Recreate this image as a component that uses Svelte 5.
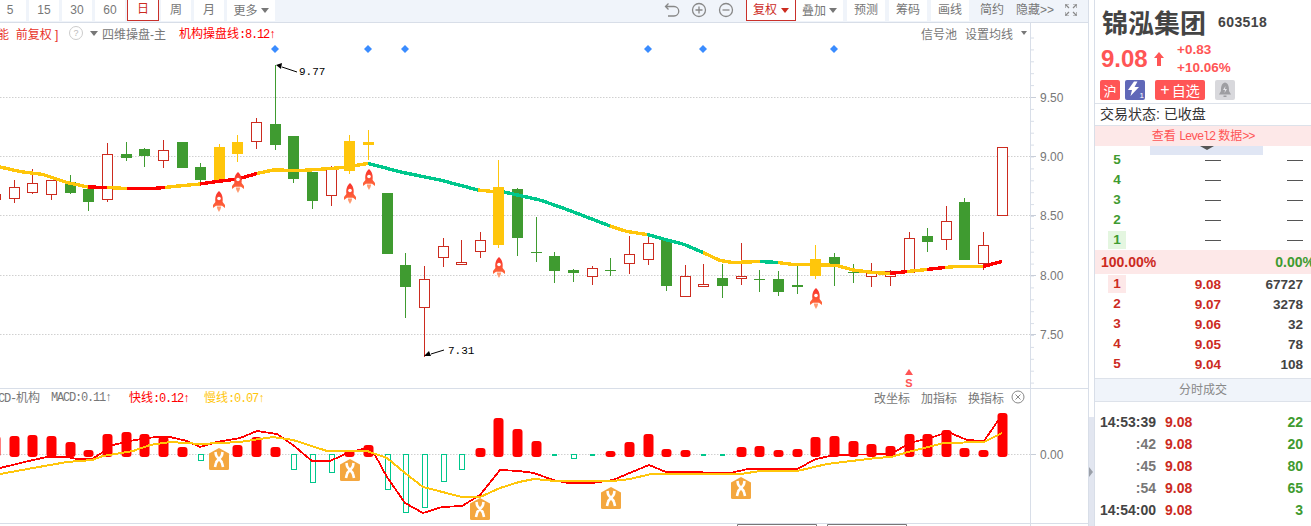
<script>
  const X = (i) => Math.floor(14.3 + 18.64 * i) + 0.5;
  // color, wickTop, bodyTop, bodyBottom, wickBottom
  const raw = [
    ['r',194,194,199,199],
    ['r',180,187,198,203],['r',169,183,192,194],['r',180,180,194,200],['g',175,182,193,194],['g',187,189,202,211],
    ['r',143,154,199,202],['g',142,154,158,161],['g',148,149,156,167],['r',140,150,160,168],['g',142,142,168,168],
    ['g',163,167,180,182],['y',144,147,182,182],['y',135,142,154,162],['r',118,122,141,149],['g',65,124,145,150],
    ['g',136,136,179,183],['g',172,172,201,209],['r',166,168,195,206],['y',135,141,171,174],['y',130,142,145,160],
    ['g',193,193,254,254],['g',253,265,287,318],['r',266,279,307,357],['r',238,246,257,267],['r',240,262,264,264],
    ['r',232,240,251,258],['y',160,187,245,248],['g',188,189,238,256],['g',217,252,253,262],['g',252,256,271,283],
    ['g',269,270,273,282],['r',266,268,276,285],['g',258,270,271,276],['r',236,254,263,274],['r',237,243,259,265],
    ['g',240,240,286,291],['r',265,276,296,296],['r',264,284,286,286],['g',264,278,286,298],['r',243,276,278,285],
    ['g',270,279,280,292],['g',271,279,292,296],['g',265,285,287,294],['y',245,259,276,279],['g',253,257,265,286],
    ['g',264,272,273,283],['r',263,272,276,287],['r',270,271,276,286],['r',232,238,272,272],['g',228,236,242,252],
    ['r',206,221,239,250],['g',198,202,260,260],['r',232,245,263,270],['r',147,147,215,215]
  ];
  const candles = raw.map((c, n) => ({ x: X(n - 1), k: c[0], wt: c[1], bt: c[2], bb: c[3], wb: c[4] }));

  const RED = '#ff0000', YEL = '#ffc60b', GRN = '#00c78c';
  const maPts = [[0,167],[20,171.5],[43,174.5],[67,182.5],[88,187],[107,187.5],[127,188.5],[153,188.5],[165,187.5],[173,186.5],[200,184],[217,181.5],[238,179],[257,173.5],[273,170],[300,170.5],[317,169.5],[343,167.5],[368,163.5],[403,172.5],[440,180],[478,190],[493,191.5],[504,192],[540,200],[567,209.5],[610,226],[627,231.5],[647,234.5],[660,238],[667,240],[683,244],[703,252.5],[720,260.5],[733,262.5],[760,261.5],[778,262.5],[793,264.5],[825,265],[837,265.5],[853,270],[873,272.5],[890,273.5],[907,271.5],[927,269.5],[945,267.5],[957,266.5],[983,266.5],[1002,261.5]];
  const colorAt = (x) => {
    const stops = [[88,YEL],[107,RED],[127,YEL],[165,RED],[200,YEL],[257,RED],[368,YEL],[478,GRN],[504,YEL],[610,GRN],[647,YEL],[703,GRN],[760,YEL],[778,GRN],[890,YEL],[907,RED],[927,YEL],[945,RED],[983,YEL],[1003,RED]];
    return stops.find((s) => x < s[0])[1];
  };
  const maSegs = maPts.slice(1).map((p, n) => ({ a: maPts[n], b: p, c: colorAt((maPts[n][0] + p[0]) / 2) }));

  const grid = [{ y: 97.5, t: '9.50' }, { y: 156.5, t: '9.00' }, { y: 215.5, t: '8.50' }, { y: 275.5, t: '8.00' }, { y: 334.5, t: '7.50' }];
  const ticks = Array.from({ length: 30 }, (_, n) => 38 + n * 11.9);
  const diamonds = [275, 368, 405, 648, 703, 834];
  const rockets = [[219,191],[238,172],[350,183],[369,169],[499,257],[816,288]];

  const macd = [436,436,435,436,442,450,434,432,434,437,447,['h',460],null,445,437,447,['h',469],['h',482],['h',472],450,445,['h',489],['h',512],['h',507],['h',481],['h',469],448,418,429,441,'d',['h',458],'d',451,442,434,449,450,'d','d',447,446,450,449,437,436,441,444,446,434,434,430,448,450,413];
  const bars = macd.map((v, n) => ({ x: X(n - 1), v }));
  const fast = [[0,468],[33,460],[47,457],[67,457],[77,459],[92,459],[103,452],[113,445],[130,441],[147,438],[157,437],[170,437],[187,441],[200,447],[217,442],[240,438],[257,431],[277,434],[293,445],[312,461],[330,461],[350,452],[367,448],[375,455],[387,477],[405,503],[423,513],[442,507],[462,506],[480,495],[500,470],[519,471],[534,473],[553,480],[568,483],[592,483],[613,480],[632,472],[649,465],[666,472],[684,472],[730,473],[748,469],[797,469],[816,459],[835,455],[891,454],[910,443],[933,437],[948,432],[967,440],[984,441],[1002,415]];
  const slow = [[0,474],[33,468],[67,462],[92,460],[103,456],[133,451],[150,445],[170,442],[200,444],[240,442],[273,437],[293,440],[327,451],[367,451],[387,458],[405,473],[423,487],[462,497],[480,497],[500,488],[519,482],[534,479],[556,481],[613,481],[630,479],[651,474],[741,474],[760,471],[797,471],[827,464],[876,458],[891,457],[908,452],[944,443],[984,442],[1002,433]];
  const pts = (a) => a.map((p) => p.join(',')).join(' ');
  const xIcons = [[219,448],[350,459],[480,498],[611,487],[741,477]];

  const leftTabs = ['5', '15', '30', '60', '日', '周', '月'];
  const bids = [5, 4, 3, 2, 1];
  const asks = [[1,'9.08','67727'],[2,'9.07','3278'],[3,'9.06','32'],[4,'9.05','78'],[5,'9.04','108']];
  const trades = [['14:53:39','9.08','22'],[':42','9.08','20'],[':45','9.08','80'],[':54','9.08','65'],['14:54:00','9.08','3']];
</script>

<div class="page">
  <main class="main">
    <header class="toolbar">
      <div class="tabs">
        {#each leftTabs as t, n}
          <span class="tab" class:first={n === 0} class:on={t === '日'}>{t}</span>
        {/each}
        <span class="tab more">更多<i class="caret grey"></i></span>
      </div>
      <div class="tools">
        <svg class="ico" viewBox="0 0 16 16" width="16" height="16"><path d="M4.5 1.5 L1.5 4.5 L4.5 7.5 M2 4.5 H10 a4.5 4.5 0 0 1 0 9.5 H4" fill="none" stroke="#888" stroke-width="1.3"/></svg>
        <svg class="ico" viewBox="0 0 16 16" width="16" height="16"><circle cx="8" cy="8" r="6.5" fill="none" stroke="#888" stroke-width="1.3"/><path d="M4.5 8h7M8 4.5v7" stroke="#888" stroke-width="1.3"/></svg>
        <svg class="ico" viewBox="0 0 16 16" width="16" height="16"><circle cx="8" cy="8" r="6.5" fill="none" stroke="#888" stroke-width="1.3"/><path d="M4.5 8h7" stroke="#888" stroke-width="1.3"/></svg>
        <span class="btn fq">复权<i class="caret redc"></i></span>
        <span class="btn dj">叠加<i class="caret grey"></i></span>
        <span class="btn">预测</span>
        <span class="btn">筹码</span>
        <span class="btn">画线</span>
        <span class="plain jy">简约</span>
        <span class="plain yc">隐藏&gt;&gt;</span>
        <svg class="full" viewBox="0 0 12 12" width="12" height="12"><path d="M0 4V0h4M1 1l3 3M8 0h4v4M11 1L8 4M0 8v4h4M1 11l3-3M12 8v4H8M11 11L8 8" fill="none" stroke="#888" stroke-width="1.2"/></svg>
      </div>
    </header>

    <section class="kline">
      <svg class="plot" viewBox="0 23 1088 365" width="1088" height="365">
        <defs>
          <linearGradient id="rk" x1="0" y1="0" x2="0" y2="1">
            <stop offset="0" stop-color="#f9302c"/>
            <stop offset="1" stop-color="#ff6a3c"/>
          </linearGradient>
        </defs>
        {#each grid as g}
          <line x1="0" x2="1030" y1={g.y} y2={g.y} stroke="#d0d0d0" stroke-dasharray="1.5 1.5"/>
        {/each}
        {#each diamonds as d}
          <path d="M{d} 45 L{d+4} 49 L{d} 53 L{d-4} 49Z" fill="#3a8cff"/>
        {/each}
        <g shape-rendering="crispEdges">
          {#each candles as c}
            {@const col = c.k === 'r' ? '#cc2b1f' : c.k === 'g' ? '#3f9b30' : '#ffc60b'}
            <line x1={c.x} x2={c.x} y1={c.wt} y2={c.wb} stroke={col}/>
            {#if c.k === 'r'}
              <rect x={c.x - 5} y={c.bt + 0.5} width="10" height={c.bb - c.bt} fill="#fff" stroke={col}/>
            {:else}
              <rect x={c.x - 5.5} y={c.bt} width="11" height={Math.max(c.bb - c.bt, 1)} fill={col}/>
            {/if}
          {/each}
          {#each maSegs as s}
            <line x1={s.a[0]} y1={s.a[1]} x2={s.b[0]} y2={s.b[1]} stroke={s.c} stroke-width="3.4"/>
          {/each}
        </g>
        {#each rockets as r}
          <g transform="translate({r[0] - 6},{r[1]})">
            <path d="M6 0 C9.6 3 10 7 9.6 11 L12 14 V17 L9 14.8 H3 L0 17 V14 L2.4 11 C2 7 2.4 3 6 0Z" fill="url(#rk)"/>
            <circle cx="6" cy="7.5" r="1.8" fill="#fff"/>
            <path d="M3.8 15.5 H8.2 L7.6 18 L6 21 L4.4 18Z" fill="#ff9a70"/>
          </g>
        {/each}
        <path d="M297 72 L282 67" stroke="#000" fill="none"/>
        <path d="M276 65 L282 63 L281 69Z" fill="#000"/>
        <text class="mark" x="299" y="75">9.77</text>
        <path d="M444 350 L431 354" stroke="#000" fill="none"/>
        <path d="M424 356 L429 351 L431 356Z" fill="#000"/>
        <text class="mark" x="448" y="354">7.31</text>
        <path d="M909 369 L913 375 H905Z" fill="#f55"/>
        <text class="sig" x="909" y="387">S</text>
        <line x1="1030.5" x2="1030.5" y1="23" y2="388" stroke="#d8dee8"/>
        {#each ticks as t}
          <line x1="1031" x2="1034" y1={t} y2={t} stroke="#d8dee8"/>
        {/each}
        {#each grid as g}
          <line x1="1031" x2="1036" y1={g.y} y2={g.y} stroke="#c8ced8"/>
          <text class="axis" x="1040" y={g.y + 4}>{g.t}</text>
        {/each}
      </svg>
      <div class="head">
        <span class="hl redt clip">能&nbsp;&nbsp;前复权 ]</span>
        <span class="q">?</span>
        <i class="caret grey tri"></i>
        <span class="hl">四维操盘-主</span>
        <span class="hl redb">机构操盘线<span class="a">:8.12↑</span></span>
      </div>
      <div class="head-r">
        <span class="xinhao">信号池</span><span>设置均线</span><i class="caret grey small"></i>
      </div>
    </section>

    <section class="macd">
      <svg class="plot" viewBox="0 389 1088 137" width="1088" height="137">
        <line x1="0" x2="1030" y1="454.5" y2="454.5" stroke="#d0d0d0" stroke-dasharray="1.5 1.5"/>
        {#each bars as b}
          {#if typeof b.v === 'number'}
            <rect x={b.x - 5} y={b.v} width="10" height={457 - b.v} rx="3" fill="#ff0000"/>
          {:else if b.v === 'd'}
            <rect x={b.x - 2.5} y="454" width="5" height="2" fill="#00c78c"/>
          {:else if b.v}
            <rect x={b.x - 2.5} y="454.5" width="5" height={b.v[1] - 454.5} fill="#fff" stroke="#00c78c" shape-rendering="crispEdges"/>
          {/if}
        {/each}
        <polyline points={pts(fast)} fill="none" stroke="#ff0000" stroke-width="1.8" shape-rendering="crispEdges"/>
        <polyline points={pts(slow)} fill="none" stroke="#ffc60b" stroke-width="2" shape-rendering="crispEdges"/>
        {#each xIcons as p}
          <g transform="translate({p[0] - 10},{p[1]})">
            <path d="M10 0 L20 5.5 V20.5 Q20 22 18.5 22 H1.5 Q0 22 0 20.5 V5.5Z" fill="#f4a73f"/>
            <path d="M6.5 4 L7 7 C7.5 10 12.5 12 13 15 L14 19 M13.5 4 L13 7 C12.5 10 7.5 12 7 15 L6 19" fill="none" stroke="#fff" stroke-width="2.6"/>
          </g>
        {/each}
        <line x1="1030.5" x2="1030.5" y1="389" y2="526" stroke="#d8dee8"/>
        <line x1="1031" x2="1036" y1="454.5" y2="454.5" stroke="#c8ced8"/>
        <text class="axis" x="1040" y="458.5">0.00</text>
        <line x1="0" x2="1088" y1="523.5" y2="523.5" stroke="#d8dee8"/>
        <path d="M737.5 526 V524.5 H816.5 V526 M827.5 526 V524.5 H906.5 V526" fill="none" stroke="#777"/>
      </svg>
      <div class="head sub">
        <span class="hl clip2"><span class="a">CD-</span>机构</span>
        <span class="hl mac"><span class="a">MACD:0.11↑</span></span>
        <span class="hl redb">快线<span class="a">:0.12↑</span></span>
        <span class="hl yel">慢线<span class="a">:0.07↑</span></span>
      </div>
      <div class="head-r sub-r">
        <span>改坐标</span><span>加指标</span><span>换指标</span>
        <svg viewBox="0 0 14 14" width="14" height="14"><circle cx="7" cy="7" r="6" fill="none" stroke="#888"/><path d="M4.5 4.5l5 5M9.5 4.5l-5 5" stroke="#888"/></svg>
      </div>
    </section>
  </main>

  <div class="handle"><i></i></div>

  <aside class="side">
    <div class="title">
      <span class="name">锦泓集团</span><span class="code">603518</span>
    </div>
    <div class="quote">
      <span class="price">9.08</span>
      <svg viewBox="0 0 10 14" width="10" height="14"><path d="M5 0 L10 6 H7 V14 H3 V6 H0Z" fill="#ff5555"/></svg>
      <div class="chg"><span>+0.83</span><span>+10.06%</span></div>
    </div>
    <div class="badges">
      <span class="bd hu">沪</span>
      <span class="bd bolt"><svg viewBox="0 0 20 20" width="20" height="20"><path d="M9 1.5 L3 10 H7 L5.5 16 L14 7 H9.5 L12.5 1.5Z" fill="#fff"/><text x="14.5" y="18" class="sub1">1</text></svg></span>
      <span class="bd add"><span class="plus">+</span>自选</span>
      <span class="bd bell"><svg viewBox="0 0 20 20" width="20" height="20"><path d="M10 2.5 C6 3.5 6 8 6 11 L4 14.5 H16 L14 11 C14 8 14 3.5 10 2.5Z M8.5 15.5 H11.5 V17 H8.5Z" fill="#9e9ea2"/><path d="M10.5 6 L8 10 H10 L9.5 13 L12 9 H10Z" fill="#e4e4e8"/></svg></span>
    </div>
    <div class="state">交易状态: 已收盘</div>
    <div class="level">查看 <span class="a">Level2</span> 数据<span class="a">&gt;&gt;</span></div>
    <div class="band"><i></i></div>
    <div class="book">
      {#each bids as b}
        <div class="row">
          <span class="n gr" class:hi={b === 1}>{b}</span><span class="p"><b></b></span><span class="v"><b></b></span>
        </div>
      {/each}
    </div>
    <div class="ratio"><span>100.00%</span><span class="gr over">0.00%</span></div>
    <div class="book">
      {#each asks as a}
        <div class="row">
          <span class="n rd" class:hi2={a[0] === 1}>{a[0]}</span><span class="p rd">{a[1]}</span><span class="v">{a[2]}</span>
        </div>
      {/each}
    </div>
    <div class="sect">分时成交</div>
    <div class="trades">
      {#each trades as t}
        <div class="trow">
          <span class="tm" class:dim={t[0].startsWith(':')}>{t[0]}</span><span class="rd tp">{t[1]}</span><span class="gr tv">{t[2]}</span>
        </div>
      {/each}
    </div>
  </aside>
</div>

<style>
  :global(body) { margin: 0; background: #fff; overflow: hidden; }
  .page { display: flex; width: 1311px; height: 526px; overflow: hidden; font-family: "Liberation Sans", "Noto Sans CJK SC", sans-serif; font-size: 12px; color: #666; }
  .main { width: 1088px; flex: none; border-right: 1px solid #d8dee8; }
  .a { font-family: "Liberation Mono", "Noto Sans CJK SC", monospace; font-size: 12px; letter-spacing: -1.2px; }
  .toolbar { height: 22px; background: #f0f4fa; border-bottom: 1px solid #d8dee8; display: flex; justify-content: space-between; }
  .tabs { display: flex; gap: 3px; height: 21px; }
  .tab { width: 30px; background: #fff; text-align: center; line-height: 20px; font-size: 12px; color: #777; box-sizing: border-box; }
  .tab.first { width: 26px; padding-right: 6px; }
  .tab.on { width: 32px; margin: 0 -1px; border: 1px solid #c9302a; border-top: 0; color: #cc2b1f; line-height: 19px; }
  .tab.more { width: 48px; display: flex; align-items: center; justify-content: center; gap: 3px; }
  .caret { display: inline-block; width: 0; height: 0; border: 4px solid transparent; border-bottom: 0; border-top-width: 5px; }
  .caret.grey { border-top-color: #777; }
  .caret.redc { border-top-color: #cc2b1f; }
  .caret.small { border-width: 3px; border-top-width: 4px; border-bottom: 0; margin-left: -1px; }
  .tools { display: flex; align-items: flex-start; height: 21px; width: 424px; }
  .ico { margin: 2px 11px 0 0; }
  .btn { width: 38px; height: 21px; background: #fff; margin-right: 4px; text-align: center; line-height: 20px; font-size: 12px; color: #777; box-sizing: border-box; flex: none; }
  .fq { width: 50px; margin: 0 0 0 1px; border: 1px solid #c9302a; border-top: 0; color: #cc2b1f; display: flex; align-items: center; justify-content: center; gap: 4px; line-height: 1; }
  .dj { width: 47px; display: flex; align-items: center; justify-content: center; gap: 3px; }
  .plain { font-size: 12px; color: #777; line-height: 20px; flex: none; }
  .jy { margin: 0 12px 0 7px; }
  .yc { margin-right: 11px; }
  .full { margin-top: 4px; flex: none; }
  .kline, .macd { position: relative; }
  .kline { height: 365px; border-bottom: 1px solid #d8dee8; }
  .macd { height: 137px; }
  .plot { display: block; }
  .head { position: absolute; left: 0; top: 2px; display: flex; align-items: center; height: 16px; white-space: nowrap; }
  .head-r { position: absolute; right: 61px; top: 2px; height: 16px; display: flex; gap: 9px; align-items: center; color: #777; }
  .xinhao { margin-right: -1px; }
  .hl { color: #777; }
  .redt { color: #e8332a; }
  .clip { width: 52px; margin-left: -3px; }
  .q { width: 12px; height: 12px; margin: 0 4px 0 20px; border: 1px solid #ccc; border-radius: 50%; color: #bbb; font-size: 9px; line-height: 12px; text-align: center; }
  .tri { margin: 0 4px 0 3px; }
  .redb { color: #ff0000; margin-left: 13px; }
  .sub { top: 0; }
  .clip2 { margin-left: -2px; width: 42px; margin-right: 11px; }
  .mac { width: 64px; }
  .mac + .redb { margin-left: 14px; }
  .yel { color: #ffc60b; margin-left: 15px; }
  .sub-r { right: 63px; top: 0; gap: 11px; }
  .sub-r svg { margin-left: -4px; }
  .handle { width: 6px; flex: none; display: flex; flex-direction: column; justify-content: flex-end; border-right: 1px solid #d8dee8; box-sizing: border-box; }
  .handle i { display: block; height: 109px; background: #e2e6f0; position: relative; }
  .handle i::after { content: ""; position: absolute; left: 0; top: 50px; border: 5px solid transparent; border-left: 4px solid #9a9fa8; border-right: 0; }
  .side { flex: 1; min-width: 0; display: flex; flex-direction: column; }
  .title { height: 43px; display: flex; align-items: center; padding: 0 0 0 7px; box-sizing: border-box; }
  .name { font-size: 26px; font-weight: 700; color: #444; }
  .code { margin-left: 12px; font-size: 14px; font-weight: 700; color: #444; letter-spacing: .4px; }
  .quote { height: 32px; display: flex; align-items: center; padding-left: 6px; color: #ff5555; }
  .price { font-size: 24px; font-weight: 700; width: 53px; }
  .chg { margin-left: 13px; display: flex; flex-direction: column; font-size: 13.5px; font-weight: 700; line-height: 18px; }
  .badges { height: 29px; display: flex; align-items: flex-start; padding: 5px 0 0 5px; box-sizing: border-box; border-bottom: 1px solid #dde2ea; }
  .bd { width: 20px; height: 20px; border-radius: 2px; display: flex; align-items: center; justify-content: center; color: #fff; font-size: 13px; margin-right: 5px; }
  .hu { background: #ff5555; }
  .bolt { background: #6068b8; margin-right: 10px; }
  .sub1 { fill: #fff; font-size: 8px; }
  .add { width: 50px; background: #ff5555; font-size: 14px; margin-right: 10px; gap: 2px; }
  .plus { font-size: 16px; font-weight: 400; line-height: 1; }
  .bell { background: #d8d8dc; }
  .state { height: 22px; box-sizing: border-box; line-height: 21px; font-size: 14px; color: #333; padding-left: 5px; border-bottom: 1px solid #dde2ea; }
  .level { height: 20px; line-height: 20px; background: #fde8e8; color: #ff5555; text-align: center; font-size: 12px; }
  .band { height: 9px; margin: 0 48px -5px 55px; background: #e0e6f4; display: flex; justify-content: center; }
  .band i { width: 0; height: 0; border: 7px solid transparent; border-top: 4px solid #555; border-bottom: 0; }
  .book { display: flex; flex-direction: column; position: relative; }
  .row { height: 20px; display: flex; align-items: center; font-size: 13.5px; font-weight: 700; color: #444; }
  .n { width: 18px; height: 18px; margin-left: 13px; text-align: center; line-height: 18px; flex: none; }
  .p { width: 95px; text-align: right; flex: none; }
  .v { width: 82px; text-align: right; flex: none; }
  .p b, .v b { display: inline-block; width: 16px; height: 1px; background: #555; vertical-align: middle; font-weight: 400; }
  .gr { color: #3f9b30; }
  .rd { color: #cc2b1f; }
  .hi { background: #e4f6e0; }
  .hi2 { background: #fde8e8; }
  .ratio { height: 24px; background: #fde8e8; display: flex; justify-content: space-between; align-items: center; padding: 0 0 0 6px; font-size: 14px; font-weight: 700; color: #cc2b1f; white-space: nowrap; }
  .over { margin-right: -4px; }
  .sect { height: 24px; box-sizing: border-box; margin-top: 4px; line-height: 22px; background: #f0f4fa; border-top: 1px solid #dde2ea; border-bottom: 1px solid #dde2ea; text-align: center; color: #888; }
  .trades { padding-top: 9px; }
  .trow { height: 22px; display: flex; align-items: center; font-size: 14px; font-weight: 700; }
  .tm { width: 61px; text-align: right; color: #444; flex: none; }
  .tm.dim { color: #777; }
  .tp { margin-left: 9px; width: 40px; flex: none; }
  .tv { width: 98px; text-align: right; flex: none; }
  .mark { font-family: "Liberation Mono", monospace; font-size: 11px; fill: #000; }
  .sig { font-size: 11px; font-weight: 700; fill: #f55; text-anchor: middle; }
  .axis { font-size: 12px; fill: #777; }
</style>
